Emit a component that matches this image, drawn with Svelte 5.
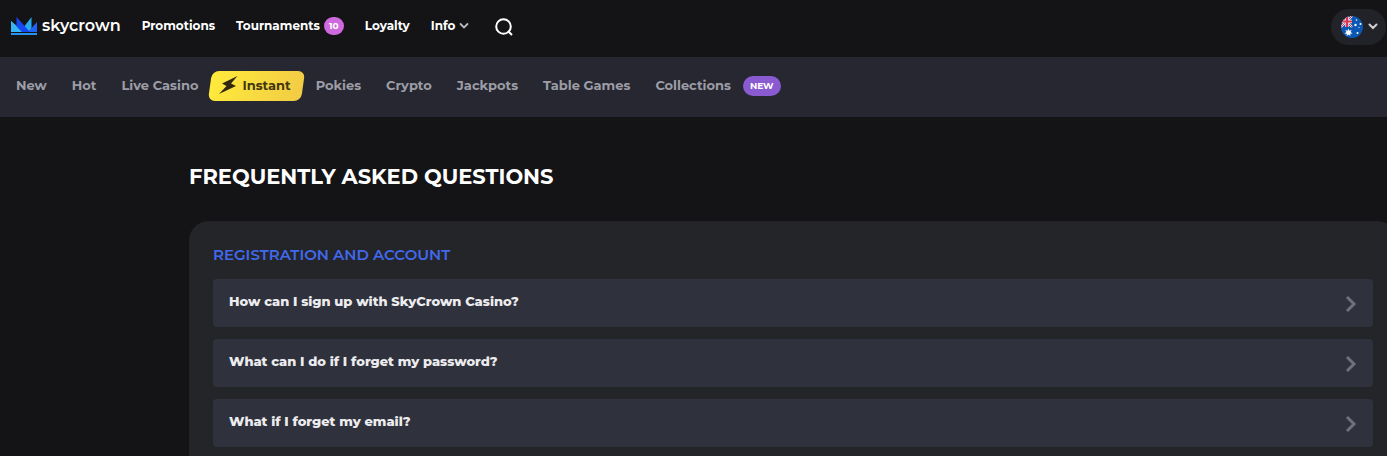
<script lang="ts">
  interface Category {
    label: string;
    featured?: boolean;
    tag?: string;
  }

  const categories: Category[] = [
    { label: "New" },
    { label: "Hot" },
    { label: "Live Casino" },
    { label: "Instant", featured: true },
    { label: "Pokies" },
    { label: "Crypto" },
    { label: "Jackpots" },
    { label: "Table Games" },
    { label: "Collections", tag: "NEW" },
  ];

  const questions = [
    "How can I sign up with SkyCrown Casino?",
    "What can I do if I forget my password?",
    "What if I forget my email?",
  ];
</script>

<header class="topbar">
  <a class="logo" href="#home">
    <svg width="26" height="18" viewBox="0 0 26 18" aria-hidden="true">
      <path d="M0 4l7 6v5H0z" fill="#35b5f2" />
      <path d="M20.500 0v15H9z" fill="#27a9ee" />
      <path d="M26 5v10h-9z" fill="#1f63f5" />
      <path d="M5.500 0L19 15H5.500z" fill="#1747f0" />
      <path d="M0 4l11 11H0z" fill="#35b5f2" />
      <path d="M0 16h26v2H0z" fill="#2592ee" />
    </svg>
    <span>skycrown</span>
  </a>
  <nav class="main-nav" aria-label="Main">
    <a href="#promotions">Promotions</a>
    <a href="#tournaments">Tournaments <span class="count">10</span></a>
    <a href="#loyalty">Loyalty</a>
    <button class="info">
      Info
      <svg width="10" height="7" viewBox="0 0 10 7" aria-hidden="true"><path d="M1.500 2L5 5.500 8.500 2" fill="none" stroke="#b9bac0" stroke-width="1.800" stroke-linecap="round" /></svg>
    </button>
  </nav>
  <button class="search" aria-label="Search">
    <svg width="18" height="18" viewBox="0 0 18 18"><circle cx="8.500" cy="8.500" r="7.300" fill="none" stroke="#fff" stroke-width="2" /><path d="M13 13l4 4" stroke="#fff" stroke-width="2" /></svg>
  </button>
  <button class="locale" aria-label="Country: Australia">
    <svg width="22" height="22" viewBox="0 0 22 22">
      <clipPath id="flag"><circle cx="11" cy="11" r="11" /></clipPath>
      <g clip-path="url(#flag)">
        <path d="M0 0h22v22H0z" fill="#0b57b3" />
        <path d="M0 0l11 11M11 0L0 11" stroke="#f1eef3" stroke-width="2" />
        <path d="M0 0l11 11M11 0L0 11" stroke="#d93450" stroke-width="1" />
        <path d="M6 0v11M0 5.500h11" stroke="#f1eef3" stroke-width="3.400" />
        <path d="M6 0v11M0 5.500h11" stroke="#d93450" stroke-width="2.200" />
        <path d="M7.500 12.500l.9 2.200 2.300-.7-1.100 2.100 2 1.300-2.400.4.200 2.300-1.900-1.600-1.900 1.600.2-2.300-2.400-.4 2-1.300-1.100-2.100 2.300.7z" fill="#fff" />
        <g fill="#fff">
          <circle cx="15.500" cy="4" r=".8" />
          <circle cx="14.500" cy="9" r="1.200" />
          <circle cx="19.500" cy="8" r="1" />
          <circle cx="18" cy="11.500" r=".6" />
          <circle cx="16.500" cy="17" r="1" />
        </g>
      </g>
    </svg>
    <svg width="10" height="7" viewBox="0 0 10 7" aria-hidden="true"><path d="M1.500 1.500L5 5l3.500-3.500" fill="none" stroke="#cfd0d4" stroke-width="2" stroke-linecap="round" /></svg>
  </button>
</header>

<nav class="categories" aria-label="Games">
  {#each categories as category}
    <a class:featured={category.featured} href="#games">
      {#if category.featured}
        <svg width="20" height="18" viewBox="0 0 20 18" aria-hidden="true"><path d="M18.500 0L3 7.500l4.500 2.500L0 18l17-8-5-2.500z" fill="#30290f" /></svg>
      {/if}
      {category.label}
      {#if category.tag}
        <span class="tag">{category.tag}</span>
      {/if}
    </a>
  {/each}
</nav>

<main>
  <h1>Frequently asked questions</h1>
  <section class="card">
    <h2>Registration and account</h2>
    <ul>
      {#each questions as question}
        <li>
          <button class="question">
            <span>{question}</span>
            <svg width="12" height="18" viewBox="0 0 12 18" aria-hidden="true"><path d="M2 2l7 7-7 7" fill="none" stroke="#6e707b" stroke-width="3" /></svg>
          </button>
        </li>
      {/each}
    </ul>
  </section>
</main>

<style>
  :global(body) {
    margin: 0;
    overflow-x: hidden;
    background: #141416;
    color: #fff;
    font-family: Montserrat, Inter, "Liberation Sans", sans-serif;
  }

  a {
    color: inherit;
    text-decoration: none;
  }

  button {
    padding: 0;
    border: 0;
    background: none;
    color: inherit;
    font: inherit;
    cursor: pointer;
  }

  svg {
    display: block;
    flex: none;
  }

  .topbar {
    display: flex;
    align-items: center;
    box-sizing: border-box;
    height: 57px;
    padding: 0 1px 4px 11px;
  }

  .logo {
    display: flex;
    align-items: center;
    gap: 5px;
    margin-right: 21px;
    padding-bottom: 2px;
    font-size: 16px;
    font-weight: 600;
    line-height: 20px;
  }

  .main-nav {
    display: flex;
    align-items: center;
    gap: 21px;
    padding-bottom: 2px;
    font-size: 12px;
    font-weight: 700;
    line-height: 20px;
  }

  .main-nav a,
  .info {
    display: flex;
    align-items: center;
    gap: 4px;
  }

  .count {
    width: 20px;
    border-radius: 10px;
    background: #cf69df;
    font-size: 9px;
    line-height: 18px;
    text-align: center;
  }

  .search {
    margin-left: 26px;
  }

  .locale {
    display: flex;
    align-items: center;
    gap: 5px;
    height: 36px;
    margin-left: auto;
    padding: 0 8px 0 10px;
    border-radius: 18px;
    background: #222328;
  }

  .categories {
    display: flex;
    align-items: center;
    gap: 1px;
    box-sizing: border-box;
    height: 60px;
    padding: 0 4px 2px;
    background: #262730;
    color: #9c9da6;
    font-size: 13px;
    font-weight: 700;
    line-height: 20px;
  }

  .categories a {
    display: flex;
    align-items: center;
    padding: 0 12px 2px;
    white-space: nowrap;
  }

  .categories .featured {
    position: relative;
    z-index: 0;
    box-sizing: border-box;
    gap: 3px;
    height: 30px;
    padding: 0 12px 2px 8px;
    color: #42380f;
  }

  .featured::before {
    content: "";
    position: absolute;
    inset: 0 -1px;
    z-index: -1;
    border-radius: 7px;
    background: linear-gradient(100deg, #ffeb3b, #f2cb45);
    transform: skewX(-8deg);
  }

  .tag {
    margin: 2px 0 0 12px;
    padding: 0 7px;
    border-radius: 10px;
    background: #8a5bd0;
    color: #fff;
    font-size: 9px;
  }

  main {
    padding: 47px 0 0 189px;
  }

  h1 {
    margin: 0;
    font-size: 21px;
    font-weight: 700;
    line-height: 26px;
    text-transform: uppercase;
  }

  .card {
    margin: 31px -10px 0 0;
    padding: 24px 24px 48px;
    border-radius: 20px;
    background: #242529;
  }

  h2 {
    margin: 0 0 14px;
    color: #4169ef;
    font-size: 15px;
    font-weight: 600;
    line-height: 20px;
    text-transform: uppercase;
  }

  ul {
    display: grid;
    gap: 12px;
    margin: 0;
    padding: 0;
    list-style: none;
  }

  .question {
    display: flex;
    align-items: center;
    justify-content: space-between;
    width: 100%;
    height: 48px;
    padding: 2px 16px 0;
    border-radius: 4px;
    background: #2f313d;
    color: #ececee;
    font-size: 13px;
    font-weight: 800;
    text-align: left;
  }

  .question span {
    padding-bottom: 6px;
  }
</style>
